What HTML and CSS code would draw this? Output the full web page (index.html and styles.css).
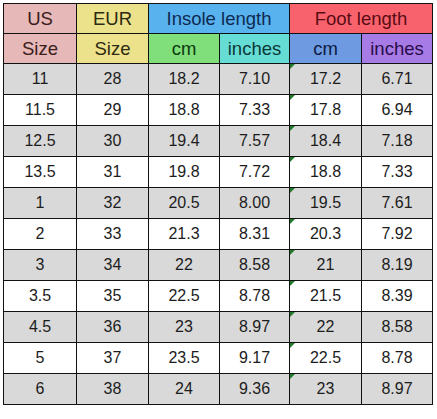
FILE: index.html
```html
<!DOCTYPE html>
<html>
<head>
<meta charset="utf-8">
<link rel="stylesheet" href="styles.css">
</head>
<body>
<div class="sheet">
  <div class="c h us">US</div>
  <div class="c h eur">EUR</div>
  <div class="c h ins span2">Insole length</div>
  <div class="c h foot span2">Foot length</div>
  <div class="c h us">Size</div>
  <div class="c h eur">Size</div>
  <div class="c h icm">cm</div>
  <div class="c h iin">inches</div>
  <div class="c h fcm">cm</div>
  <div class="c h fin">inches</div>

  <div class="c g">11</div><div class="c g">28</div><div class="c g">18.2</div><div class="c g">7.10</div><div class="c g mark">17.2</div><div class="c g">6.71</div>
  <div class="c">11.5</div><div class="c">29</div><div class="c">18.8</div><div class="c">7.33</div><div class="c mark">17.8</div><div class="c">6.94</div>
  <div class="c g">12.5</div><div class="c g">30</div><div class="c g">19.4</div><div class="c g">7.57</div><div class="c g mark">18.4</div><div class="c g">7.18</div>
  <div class="c">13.5</div><div class="c">31</div><div class="c">19.8</div><div class="c">7.72</div><div class="c mark">18.8</div><div class="c">7.33</div>
  <div class="c g">1</div><div class="c g">32</div><div class="c g">20.5</div><div class="c g">8.00</div><div class="c g mark">19.5</div><div class="c g">7.61</div>
  <div class="c">2</div><div class="c">33</div><div class="c">21.3</div><div class="c">8.31</div><div class="c mark">20.3</div><div class="c">7.92</div>
  <div class="c g">3</div><div class="c g">34</div><div class="c g">22</div><div class="c g">8.58</div><div class="c g mark">21</div><div class="c g">8.19</div>
  <div class="c">3.5</div><div class="c">35</div><div class="c">22.5</div><div class="c">8.78</div><div class="c mark">21.5</div><div class="c">8.39</div>
  <div class="c g">4.5</div><div class="c g">36</div><div class="c g">23</div><div class="c g">8.97</div><div class="c g mark">22</div><div class="c g">8.58</div>
  <div class="c">5</div><div class="c">37</div><div class="c">23.5</div><div class="c">9.17</div><div class="c mark">22.5</div><div class="c">8.78</div>
  <div class="c g">6</div><div class="c g">38</div><div class="c g">24</div><div class="c g">9.36</div><div class="c g mark">23</div><div class="c g">8.97</div>
</div>
</body>
</html>
```
FILE: styles.css
```css
html, body {
  margin: 0;
  padding: 0;
  background: #fff;
}
body {
  padding: 3px 0 0 3px;
  font-family: "Liberation Sans", Arial, sans-serif;
}
.sheet {
  display: grid;
  grid-template-columns: 72px 71px 70px 69px 71px 70px;
  grid-template-rows: 29px 29px repeat(11, 30px);
  gap: 1px;
  padding: 1px;
  background: #111;
  width: max-content;
}
.c {
  display: flex;
  align-items: center;
  justify-content: center;
  background: #fff;
  color: #1c1c1c;
  font-size: 16px;
  position: relative;
}
.c.g { background: #d9d9d9; }
.h { font-size: 18.5px; }
.span2 { grid-column: span 2; }
.us { background: #e6b8b7; color: #3a1c1c; }
.eur { background: #ece28b; color: #2c2a10; }
.ins { background: #58b2ee; color: #0e2a52; }
.foot { background: #f8626d; color: #5a0c14; }
.icm { background: #80df7b; color: #0c3a0c; }
.iin { background: #66ddd4; color: #0c3838; }
.fcm { background: #6d9ae0; color: #0c1a42; }
.fin { background: #a67be6; color: #2a0c4a; }
.mark::before {
  content: "";
  position: absolute;
  left: 0;
  top: 0;
  width: 0;
  height: 0;
  border-top: 5px solid #1f7a2a;
  border-right: 5px solid transparent;
}
```
